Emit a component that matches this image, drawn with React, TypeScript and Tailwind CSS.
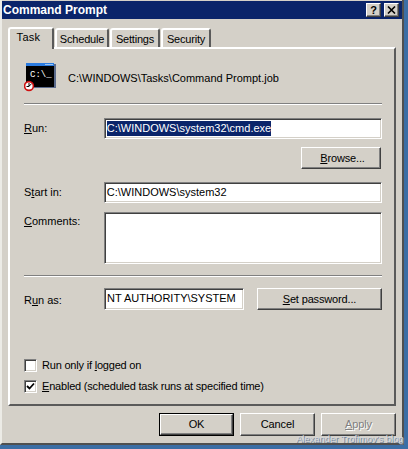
import React from 'react';

const raised = 'border border-t-white border-l-white border-r-[#404040] border-b-[#404040] shadow-[inset_-1px_-1px_0_#808080]';
const sunken = 'border border-t-[#808080] border-l-[#808080] border-r-white border-b-white shadow-[inset_1px_1px_0_#404040,inset_-1px_-1px_0_#d4d0c8] bg-white';

function U({ children }: { children: React.ReactNode }) {
  return <span className="underline underline-offset-1">{children}</span>;
}

function Tab({ label, active, width }: { label: string; active?: boolean; width: string }) {
  if (active) {
    return (
      <div className={`relative z-10 -mb-[2px] h-[22px] ${width} flex items-center justify-center pb-[3px] pr-[5px] tracking-[0.3px] rounded-t-[3px] border-t-2 border-l-2 border-r-2 border-t-white border-l-white border-r-[#5a5a5a] bg-[#d4d0c8]`}>
        {label}
      </div>
    );
  }
  return (
    <div className={`h-[19px] ${width} flex items-center justify-center pt-[1px] tracking-[-0.2px] rounded-t-[3px] border-t-2 border-l-2 border-r-2 border-t-white border-l-white border-r-[#5a5a5a]`}>
      {label}
    </div>
  );
}

function Button({ children, className, disabled }: { children: React.ReactNode; className: string; disabled?: boolean }) {
  return (
    <div className={`${raised} ${className} flex items-center justify-center tracking-[-0.15px] ${disabled ? 'text-[#808080]' : ''}`}>
      {children}
    </div>
  );
}

function TaskIcon() {
  return (
    <svg width="32" height="30" viewBox="0 0 32 30" className="shrink-0">
      <rect x="2" y="0" width="28" height="24" fill="#000000" />
      <rect x="30" y="1" width="2" height="24" fill="#5b6b8c" />
      <rect x="3" y="24" width="29" height="1" fill="#5b6b8c" />
      <rect x="2" y="0" width="28" height="3" fill="#2a7be0" />
      <rect x="21" y="1" width="8" height="1" fill="#9cc4f0" />
      <text x="6" y="14" fontFamily="'Liberation Mono', monospace" fontSize="9" fill="#ffffff">C:\_</text>
      <circle cx="5" cy="23" r="4.4" fill="#ffffff" stroke="#d01010" strokeWidth="1.6" />
      <path d="M5 20V23.5H2.5M5 23L7.5 21" fill="none" stroke="#000000" strokeWidth="1" />
    </svg>
  );
}

export default function App() {
  return (
    <div className="relative w-[408px] h-[449px] overflow-hidden bg-[#3c6ea5] text-[11px] leading-none text-black" style={{ fontFamily: "'Liberation Sans', Arial, sans-serif" }}>
      <div className="w-[404px] h-[445px] bg-[#d4d0c8] border-l-2 border-r-2 border-b-2 border-l-[#ecebe6] border-r-[#505050] border-b-[#505050] pt-[1px]">
        {/* Title bar */}
        <div className="h-[18px] bg-[#0a246a] flex items-center justify-between pl-[1px] pr-[3px]">
          <span className="text-[12px] font-bold text-white">Command Prompt</span>
          <div className="flex gap-[3px]">
            <div className={`${raised} w-[15px] h-[14px] bg-[#d4d0c8] flex items-center justify-center text-[11px] font-bold`}>?</div>
            <div className={`${raised} w-[15px] h-[14px] bg-[#d4d0c8] flex items-center justify-center`}>
              <svg width="9" height="8" viewBox="0 0 9 8"><path d="M1 0.5L8 7.5M8 0.5L1 7.5" fill="none" stroke="#000" strokeWidth="1.6" /></svg>
            </div>
          </div>
        </div>

        {/* Tabs */}
        <div className="flex items-end gap-[1px] mt-[8px] ml-[6px] h-[20px]">
          <Tab label="Task" active width="w-[46px]" />
          <Tab label="Schedule" width="w-[54px]" />
          <Tab label="Settings" width="w-[50px]" />
          <Tab label="Security" width="w-[50px]" />
        </div>

        {/* Page */}
        <div className="ml-[6px] w-[388px] h-[359px] border-t-2 border-l-2 border-r-2 border-b-2 border-t-white border-l-white border-r-[#5a5a5a] border-b-[#5a5a5a] pt-[14px] pl-[14px] pr-[12px]">
          <div className="flex items-center gap-[12px] h-[30px]">
            <TaskIcon />
            <span>C:\WINDOWS\Tasks\Command Prompt.job</span>
          </div>
          <div className="mt-[10px] h-[2px] w-[358px] bg-[#808080] border-b border-white" />

          <div className="mt-[13px] flex">
            <div className="w-[80px] pt-[5px]"><U>R</U>un:</div>
            <div className={`${sunken} w-[279px] h-[21px] flex items-center pl-[2px]`}>
              <span className="bg-[#0a246a] text-white h-[15px] flex items-center">C:\WINDOWS\system32\cmd.exe</span>
            </div>
          </div>
          <div className="mt-[8px] flex justify-end pr-[1px]">
            <Button className="w-[80px] h-[22px]"><span className="pl-[3px]"><U>B</U>rowse...</span></Button>
          </div>
          <div className="mt-[13px] flex">
            <div className="w-[80px] pt-[5px]">S<U>t</U>art in:</div>
            <div className={`${sunken} w-[279px] h-[21px] flex items-center pl-[2px]`}>C:\WINDOWS\system32</div>
          </div>
          <div className="mt-[9px] flex">
            <div className="w-[80px] pt-[4px]"><U>C</U>omments:</div>
            <div className={`${sunken} w-[279px] h-[52px]`} />
          </div>
          <div className="mt-[11px] h-[2px] w-[358px] bg-[#808080] border-b border-white" />
          <div className="mt-[11px] flex items-center">
            <div className="w-[80px] pt-[2px]">R<U>u</U>n as:</div>
            <div className={`${sunken} w-[140px] h-[22px] flex items-center pl-[2px] pb-[1px] whitespace-nowrap`}>NT AUTHORITY\SYSTEM</div>
            <Button className="ml-[13px] w-[125px] h-[22px]"><span><U>S</U>et password...</span></Button>
          </div>

          <div className="mt-[49px] flex items-center gap-[5px] h-[13px] tracking-[-0.2px]">
            <div className={`${sunken} w-[13px] h-[13px]`} />
            <span>Run only if <U>l</U>ogged on</span>
          </div>
          <div className="mt-[8px] flex items-center gap-[5px] h-[13px] tracking-[-0.2px]">
            <div className={`${sunken} w-[13px] h-[13px] flex items-center justify-center`}>
              <svg width="9" height="9" viewBox="0 0 9 9"><path d="M1 4l2.5 2.5L8 1.5" fill="none" stroke="#000" strokeWidth="1.8" /></svg>
            </div>
            <span><U>E</U>nabled (scheduled task runs at specified time)</span>
          </div>
        </div>

        {/* Footer buttons */}
        <div className="mt-[7px] ml-[157px] flex gap-[6px]">
          <div className="w-[75px] h-[23px] border border-black">
            <Button className="w-full h-full">OK</Button>
          </div>
          <Button className="w-[75px] h-[23px]">Cancel</Button>
          <Button className="w-[75px] h-[23px]" disabled>
            <span className="[text-shadow:1px_1px_0_#ffffff]"><U>A</U>pply</span>
          </Button>
        </div>
      </div>
      {/* Watermark */}
      <div className="absolute left-[296px] top-[434px] whitespace-nowrap text-[9.4px] text-[#d4d8de] [text-shadow:1px_1px_0_#70829a]">Alexander Trofimov's blog</div>
    </div>
  );
}
